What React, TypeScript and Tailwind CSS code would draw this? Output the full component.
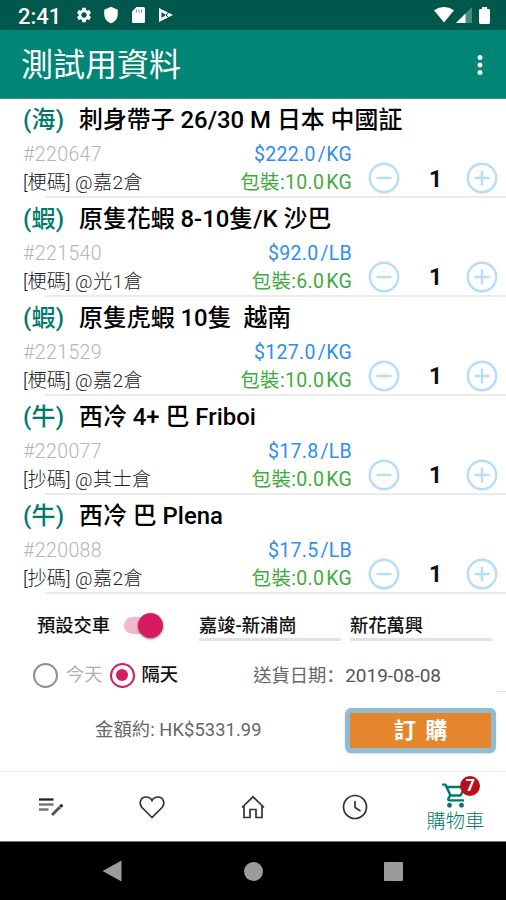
import type { ReactNode } from 'react';
import { MdMoreVert, MdSettings, MdShield, MdOutlineShoppingCart } from 'react-icons/md';

type Item = {
  kind: string;
  name: string;
  code: string;
  store: string;
  price: string;
  unit: string;
  pack: string;
  mode: string;
};

const ITEMS: Item[] = [
  { kind: '海', name: '刺身帶子 26/30 M 日本 中國証', code: '#220647', mode: '[梗碼]', store: '@嘉2倉', price: '$222.0', unit: '/KG', pack: '10.0' },
  { kind: '蝦', name: '原隻花蝦 8-10隻/K 沙巴', code: '#221540', mode: '[梗碼]', store: '@光1倉', price: '$92.0', unit: '/LB', pack: '6.0' },
  { kind: '蝦', name: '原隻虎蝦 10隻  越南', code: '#221529', mode: '[梗碼]', store: '@嘉2倉', price: '$127.0', unit: '/KG', pack: '10.0' },
  { kind: '牛', name: '西冷 4+ 巴 Friboi', code: '#220077', mode: '[抄碼]', store: '@其士倉', price: '$17.8', unit: '/LB', pack: '0.0' },
  { kind: '牛', name: '西冷 巴 Plena', code: '#220088', mode: '[抄碼]', store: '@嘉2倉', price: '$17.5', unit: '/LB', pack: '0.0' },
];

function StatusBar() {
  return (
    <div className="flex h-[30px] items-center bg-[#00574b] pl-[18px] pr-[16px] text-white">
      <span className="w-[57px] pt-[3px] text-[22px] font-medium leading-none">2:41</span>
      <MdSettings className="size-[18px]" />
      <MdShield className="ml-[9px] size-[18px]" />
      <svg className="ml-[12px]" width="13" height="16" viewBox="0 0 13 16">
        <path d="M4.500 0H11.500Q13 0 13 1.500v13Q13 16 11.500 16h-10Q0 16 0 14.500V4.500z" fill="#fff" />
        <path d="M4.500 2.500v3M7 2.500v3M9.500 2.500v3" stroke="#6f9f98" strokeWidth="1" />
      </svg>
      <svg className="ml-[13px]" width="16" height="16" viewBox="0 0 16 16">
        <path d="M1 1l14 7-14 7z" fill="#fff" />
        <path d="M3.500 5v6l4.500-3z" fill="#00574b" />
        <path d="M8 8l3-3M8 8l3 3" stroke="#00574b" strokeWidth="1" fill="none" />
      </svg>
      <svg className="ml-auto" width="20" height="16" viewBox="0 0 20 16">
        <path d="M0 3.200Q10-3 20 3.200L10 15.500z" fill="#fff" />
      </svg>
      <svg className="ml-[2px]" width="16" height="16" viewBox="0 0 16 16">
        <path d="M16 0v16H0z" fill="#4d8a81" />
        <path d="M9.500 6.500V16H0z" fill="#fff" />
      </svg>
      <svg className="ml-[7px]" width="11" height="17" viewBox="0 0 11 18" preserveAspectRatio="none">
        <path d="M3 0h5v2h1.500Q11 2 11 3.500v13Q11 18 9.500 18h-8Q0 18 0 16.500v-13Q0 2 1.500 2H3z" fill="#fff" />
      </svg>
    </div>
  );
}

function RoundButton({ plus }: { plus?: boolean }) {
  return (
    <svg width="32" height="32" viewBox="0 0 32 32" fill="none" stroke="#b6dcfb" strokeWidth="2.400">
      <circle cx="16" cy="16" r="14.200" />
      <path d={plus ? 'M8.500 16h15M16 8.500v15' : 'M8.500 16h15'} />
    </svg>
  );
}

function ItemRow({ item }: { item: Item }) {
  return (
    <div className="h-[98.95px]">
      <div className="flex h-[42px] items-center pl-[23px] pt-[2px] text-[23.9px] font-medium leading-none">
        <span className="w-[56px] tracking-[0.3px] text-[#00796b]">({item.kind})</span>
        <span className="whitespace-pre text-black">{item.name}</span>
      </div>
      <div className="flex h-[56.95px]">
        <div className="ml-[23px] w-[329px]">
          <div className="flex h-[27px] items-center justify-between text-[19.5px] leading-none">
            <span className="font-light tracking-[0.4px] text-[#b4b4b4]">{item.code}</span>
            <span className="tracking-[0.3px] text-[#2f8df0]">
              {item.price}
              <span className="ml-[2px]">{item.unit}</span>
            </span>
          </div>
          <div className="flex h-[30px] items-center justify-between leading-none">
            <span className="text-[19.2px] font-light text-[#222]">
              <span className="inline-block w-[52px]">{item.mode}</span>
              <span className="tracking-[0.4px]">{item.store}</span>
            </span>
            <span className="text-[19.5px] tracking-[0.3px] text-[#3faa3f]">
              包裝:{item.pack}
              <span className="ml-[2px]">KG</span>
            </span>
          </div>
        </div>
        <div className="ml-[16px] mt-[21px] flex h-[32px] w-[130px] items-center justify-between">
          <RoundButton />
          <span className="ml-[5px] pt-[2px] text-[23px] font-bold leading-none text-[#111]">1</span>
          <RoundButton plus />
        </div>
      </div>
      <div className="-mt-[2px] ml-[45px] h-[2px] bg-[#ebebeb]" />
    </div>
  );
}

function OrderForm() {
  return (
    <div className="h-[179px] text-[18.3px] font-medium leading-none">
      <div className="flex h-[66px] items-center pl-[37px]">
        <span className="w-[87px] pt-[2px] text-[#111]">預設交車</span>
        <div className="relative h-[17px] w-[39px] rounded-full bg-[#f3b9ce]">
          <div className="absolute -top-[4px] right-0 size-[25px] rounded-full bg-[#d81b60] shadow-sm shadow-black/40" />
        </div>
        <div className="ml-[36px] h-[32px] w-[142px] border-b-[3px] border-[#e2e2e2] pt-[8px] text-[#111]">嘉竣-新浦崗</div>
        <div className="ml-[9px] h-[32px] w-[142px] border-b-[3px] border-[#e2e2e2] pt-[8px] text-[#111]">新花萬興</div>
      </div>
      <div className="flex h-[33px] items-center pl-[33px] pt-px">
        <div className="size-[25px] rounded-full border-2 border-[#8f8f8f]" />
        <span className="ml-[8px] pt-px font-normal text-[#b0b0b0]">今天</span>
        <div className="ml-[7px] flex size-[25px] items-center justify-center rounded-full border-[2.5px] border-[#d81b60]">
          <div className="size-[12px] rounded-full bg-[#d81b60]" />
        </div>
        <span className="ml-[7px] pt-px text-[#111]">隔天</span>
        <span className="ml-[75px] w-[92px] whitespace-nowrap pt-px font-normal text-[#666]">
          送貨日期<span lang="zh-CN" className="font-['Noto_Sans_CJK_SC',sans-serif]">：</span>
        </span>
        <span className="pt-px text-[19px] font-normal text-[#555]">2019-08-08</span>
      </div>
      <div className="ml-auto h-px w-[9px] bg-[#ddd]" />
      <div className="flex h-[76px] items-center pl-[95px]">
        <span className="w-[250px] pt-px font-normal tracking-[0.1px] text-[#666]">金額約: HK$5331.99</span>
        <div className="flex h-[45px] w-[151px] items-center justify-center rounded-[6px] border-[5px] border-[#8fbcd3] bg-[#e5862d] text-[22px] font-bold text-white shadow-sm">
          <span className="whitespace-pre pt-px [word-spacing:4px]">訂 購</span>
        </div>
      </div>
    </div>
  );
}

function NavCell({ children }: { children: ReactNode }) {
  return <div className="flex flex-1 items-center justify-center">{children}</div>;
}

function BottomNav() {
  return (
    <div className="flex h-[70px] border-t border-[#eee] bg-white">
      <NavCell>
        <svg width="26" height="20" viewBox="0 0 26 20" fill="none">
          <path d="M1 2.500h14.500" stroke="#222" strokeWidth="2.300" />
          <path d="M1 7.500h14.500M1 12.500h9.500" stroke="#777" strokeWidth="2.300" />
          <path d="M14 18l8-8" stroke="#555" strokeWidth="3" />
          <path d="M22.300 9.700l2-2" stroke="#222" strokeWidth="3" />
        </svg>
      </NavCell>
      <NavCell>
        <svg width="26" height="24" viewBox="0 0 26 24" fill="none" stroke="#333" strokeWidth="1.700">
          <path d="M13 22.500L3 12.500C-.5 8.500 1.500 2 7 2c3.500 0 5 1.500 6 3.500 1-2 2.500-3.500 6-3.500 5.500 0 7.500 6.500 4 10.500z" />
        </svg>
      </NavCell>
      <NavCell>
        <svg width="24" height="24" viewBox="0 0 24 24" fill="none" stroke="#333" strokeWidth="1.700">
          <path d="M1 12.500L12 1.800l11 10.700M3 10.500V22.500h6v-8h6v8h6V10.500" />
        </svg>
      </NavCell>
      <NavCell>
        <svg className="ml-px" width="26" height="26" viewBox="0 0 26 26" fill="none" stroke="#333" strokeWidth="1.700">
          <circle cx="13" cy="13" r="11.500" />
          <path d="M13 7v6.500l5.500 3.500" />
        </svg>
      </NavCell>
      <NavCell>
        <div className="flex flex-col items-center pt-px text-[#00796b]">
          <div className="relative">
            <MdOutlineShoppingCart className="size-[29px]" />
            <div className="absolute -top-[5px] left-[19.5px] flex size-[20px] items-center justify-center rounded-full bg-[#b80f1c] text-[16px] font-bold leading-none text-white">
              7
            </div>
          </div>
          <span className="text-[19.300px] font-light leading-[23px]">購物車</span>
        </div>
      </NavCell>
    </div>
  );
}

export default function App() {
  return (
    <div className="h-[900px] w-[506px] overflow-hidden bg-white font-['Roboto','Noto_Sans_CJK_TC',sans-serif]">
      <StatusBar />
      <header className="flex h-[69px] items-center justify-between border-b border-[#3f8f84] bg-[#008577] pl-[21px] pr-[11px] pt-[2px] text-white">
        <h1 className="text-[32px] font-normal leading-none">測試用資料</h1>
        <MdMoreVert className="size-[30px]" />
      </header>
      <main className="h-[493px]">
        {ITEMS.map((item) => (
          <ItemRow key={item.code} item={item} />
        ))}
      </main>
      <OrderForm />
      <BottomNav />
      <div className="flex h-[59px] items-center justify-between border-t border-[#777] bg-black pl-[102px] pr-[103px]">
        <svg width="20" height="22" viewBox="0 0 20 22">
          <path d="M19.500 .5v21L.5 11z" fill="#9b9b9b" />
        </svg>
        <div className="size-[19px] rounded-full bg-[#9b9b9b]" />
        <div className="size-[19px] rounded-[1px] bg-[#9b9b9b]" />
      </div>
    </div>
  );
}
